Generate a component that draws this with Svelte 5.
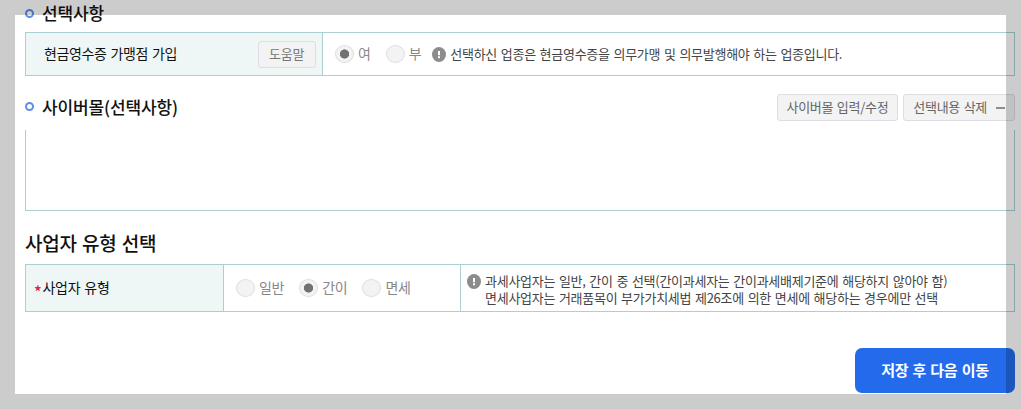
<script lang="ts">
  let cashReceipt = $state('여')
  let bizType = $state('간이')

  const receiptOptions = ['여', '부']
  const bizTypes = ['일반', '간이', '면세']
</script>

{#snippet ring()}
  <svg class="ring" width="9" height="9" viewBox="0 0 9 9">
    <circle cx="4.5" cy="4.5" r="3.5" fill="none" stroke="#5a8ded" stroke-width="2" />
  </svg>
{/snippet}

{#snippet alertIcon()}
  <svg class="alert" width="14" height="15" viewBox="0 0 14 15">
    <ellipse cx="7" cy="7.5" rx="7" ry="7.5" fill="#8c8c8c" />
    <path d="M6 4h2v4.2H6zM6 9.3h2v1.9H6z" fill="#fff" />
  </svg>
{/snippet}

<div class="page">
  <div class="title first">
    {@render ring()}
    <h3>선택사항</h3>
  </div>

  <div class="row receipt">
    <div class="th">
      <span>현금영수증 가맹점 가입</span>
      <button class="btn help">도움말</button>
    </div>
    <div class="td">
      {#each receiptOptions as opt}
        <label>
          <input type="radio" name="receipt" value={opt} bind:group={cashReceipt} disabled />
          <span>{opt}</span>
        </label>
      {/each}
      {@render alertIcon()}
      <p class="note">선택하신 업종은 현금영수증을 의무가맹 및 의무발행해야 하는 업종입니다.</p>
    </div>
  </div>

  <div class="title mall-title">
    {@render ring()}
    <h3>사이버몰(선택사항)</h3>
    <div class="actions">
      <button class="btn">사이버몰 입력/수정</button>
      <button class="btn">선택내용 삭제 <i class="minus"></i></button>
    </div>
  </div>

  <div class="mall"></div>

  <h2>사업자 유형 선택</h2>

  <div class="row biz">
    <div class="th">
      <em>*</em><span>사업자 유형</span>
    </div>
    <div class="td types">
      {#each bizTypes as opt}
        <label>
          <input type="radio" name="biz" value={opt} bind:group={bizType} disabled />
          <span>{opt}</span>
        </label>
      {/each}
    </div>
    <div class="td info">
      {@render alertIcon()}
      <p class="note">
        과세사업자는 일반, 간이 중 선택(간이과세자는 간이과세배제기준에 해당하지 않아야 함)<br />
        면세사업자는 거래품목이 부가가치세법 제26조에 의한 면세에 해당하는 경우에만 선택
      </p>
    </div>
  </div>

  <div class="footer">
    <button class="save">저장 후 다음 이동</button>
  </div>

  <div class="dim"></div>
</div>

<style>
  :global(body) { background: #fff; }
  .page { position: relative; box-sizing: border-box; width: 1021px; height: 409px; padding: 0 6px 0 25px; overflow: hidden; font-family: "Noto Sans CJK KR", sans-serif; color: #111; letter-spacing: -0.27px; word-spacing: 1.1px; }
  .page * { box-sizing: border-box; }
  h2, h3, p { margin: 0; }
  button { font-family: inherit; letter-spacing: inherit; word-spacing: inherit; }

  .title { display: flex; align-items: center; }
  .first { height: 28px; }
  .mall-title { height: 27px; margin-top: 18px; }
  .ring { margin: 0 8px 2px 0; flex: none; }
  h3 { padding-bottom: 2px; font-size: 17px; font-weight: 500; line-height: 24px; letter-spacing: -0.12px; }
  h2 { margin-top: 18px; font-size: 19px; font-weight: 500; line-height: 28px; word-spacing: 1.4px; }

  .row { display: flex; border: 1px solid #abcfd2; }
  .th { display: flex; align-items: center; background: #eef7f6; border-right: 1px solid #abcfd2; font-size: 14px; }
  .th span { padding-bottom: 2px; }
  .td { display: flex; align-items: center; }

  .receipt { height: 44px; margin-top: 4px; }
  .receipt .th { width: 297px; padding: 0 6px 0 18px; justify-content: space-between; letter-spacing: -0.35px; }
  .receipt .td { padding-left: 12px; }
  .receipt .note { padding-bottom: 2px; }
  .receipt label { margin-right: 15px; }
  .receipt label + label { margin-right: 11px; }

  .btn { display: flex; align-items: center; height: 27px; padding: 0 9px 2px; background: #f3f3f4; border: 1px solid #dddde2; border-radius: 3px; color: #666; font-size: 13px; letter-spacing: -0.3px; white-space: nowrap; }
  .help { width: 58px; padding: 0 0 2px 10px; color: #777; letter-spacing: -0.2px; }
  .actions { display: flex; gap: 5px; margin-left: auto; }
  .minus { width: 9px; height: 2px; margin: 2px 0 0 9px; background: #8c8c8c; }

  label { display: flex; align-items: center; color: #888; font-size: 14px; }
  label span { padding-bottom: 2px; }
  input { appearance: none; width: 19px; height: 18px; margin: 0 4px 0 0; border: 1px solid #dddde1; border-radius: 50%; background: #f3f3f4; }
  input:checked { background: radial-gradient(circle, #727272 4.3px, #f3f3f4 4.9px); }

  .alert { flex: none; }
  .note { margin-left: 4px; color: #444; font-size: 13px; line-height: 17px; white-space: nowrap; }

  .mall { height: 81px; margin-top: 9px; border: 1px solid #abcfd2; border-top: none; }

  .biz { height: 48px; margin-top: 7px; }
  .biz .th { width: 198px; padding-left: 8px; }
  em { color: #e6194b; font-size: 16px; font-style: normal; font-weight: 500; margin-right: 1px; padding-top: 5px; }
  .types { width: 237px; padding-left: 12px; gap: 15px; border-right: 1px solid #abcfd2; }
  .info { padding-left: 6px; }
  .info .alert { align-self: flex-start; margin-top: 9px; }
  .info .note { padding-top: 2px; }

  .footer { display: flex; justify-content: flex-end; margin-top: 36px; }
  .save { width: 160px; height: 45px; padding: 0 0 2px; border: none; border-radius: 7px; background: #246beb; color: #fff; font-size: 15px; font-weight: 700; }

  /* translucent frame over the page edges */
  .dim { position: absolute; inset: 0; border: 15px solid rgba(0, 0, 0, 0.2); pointer-events: none; }
</style>
